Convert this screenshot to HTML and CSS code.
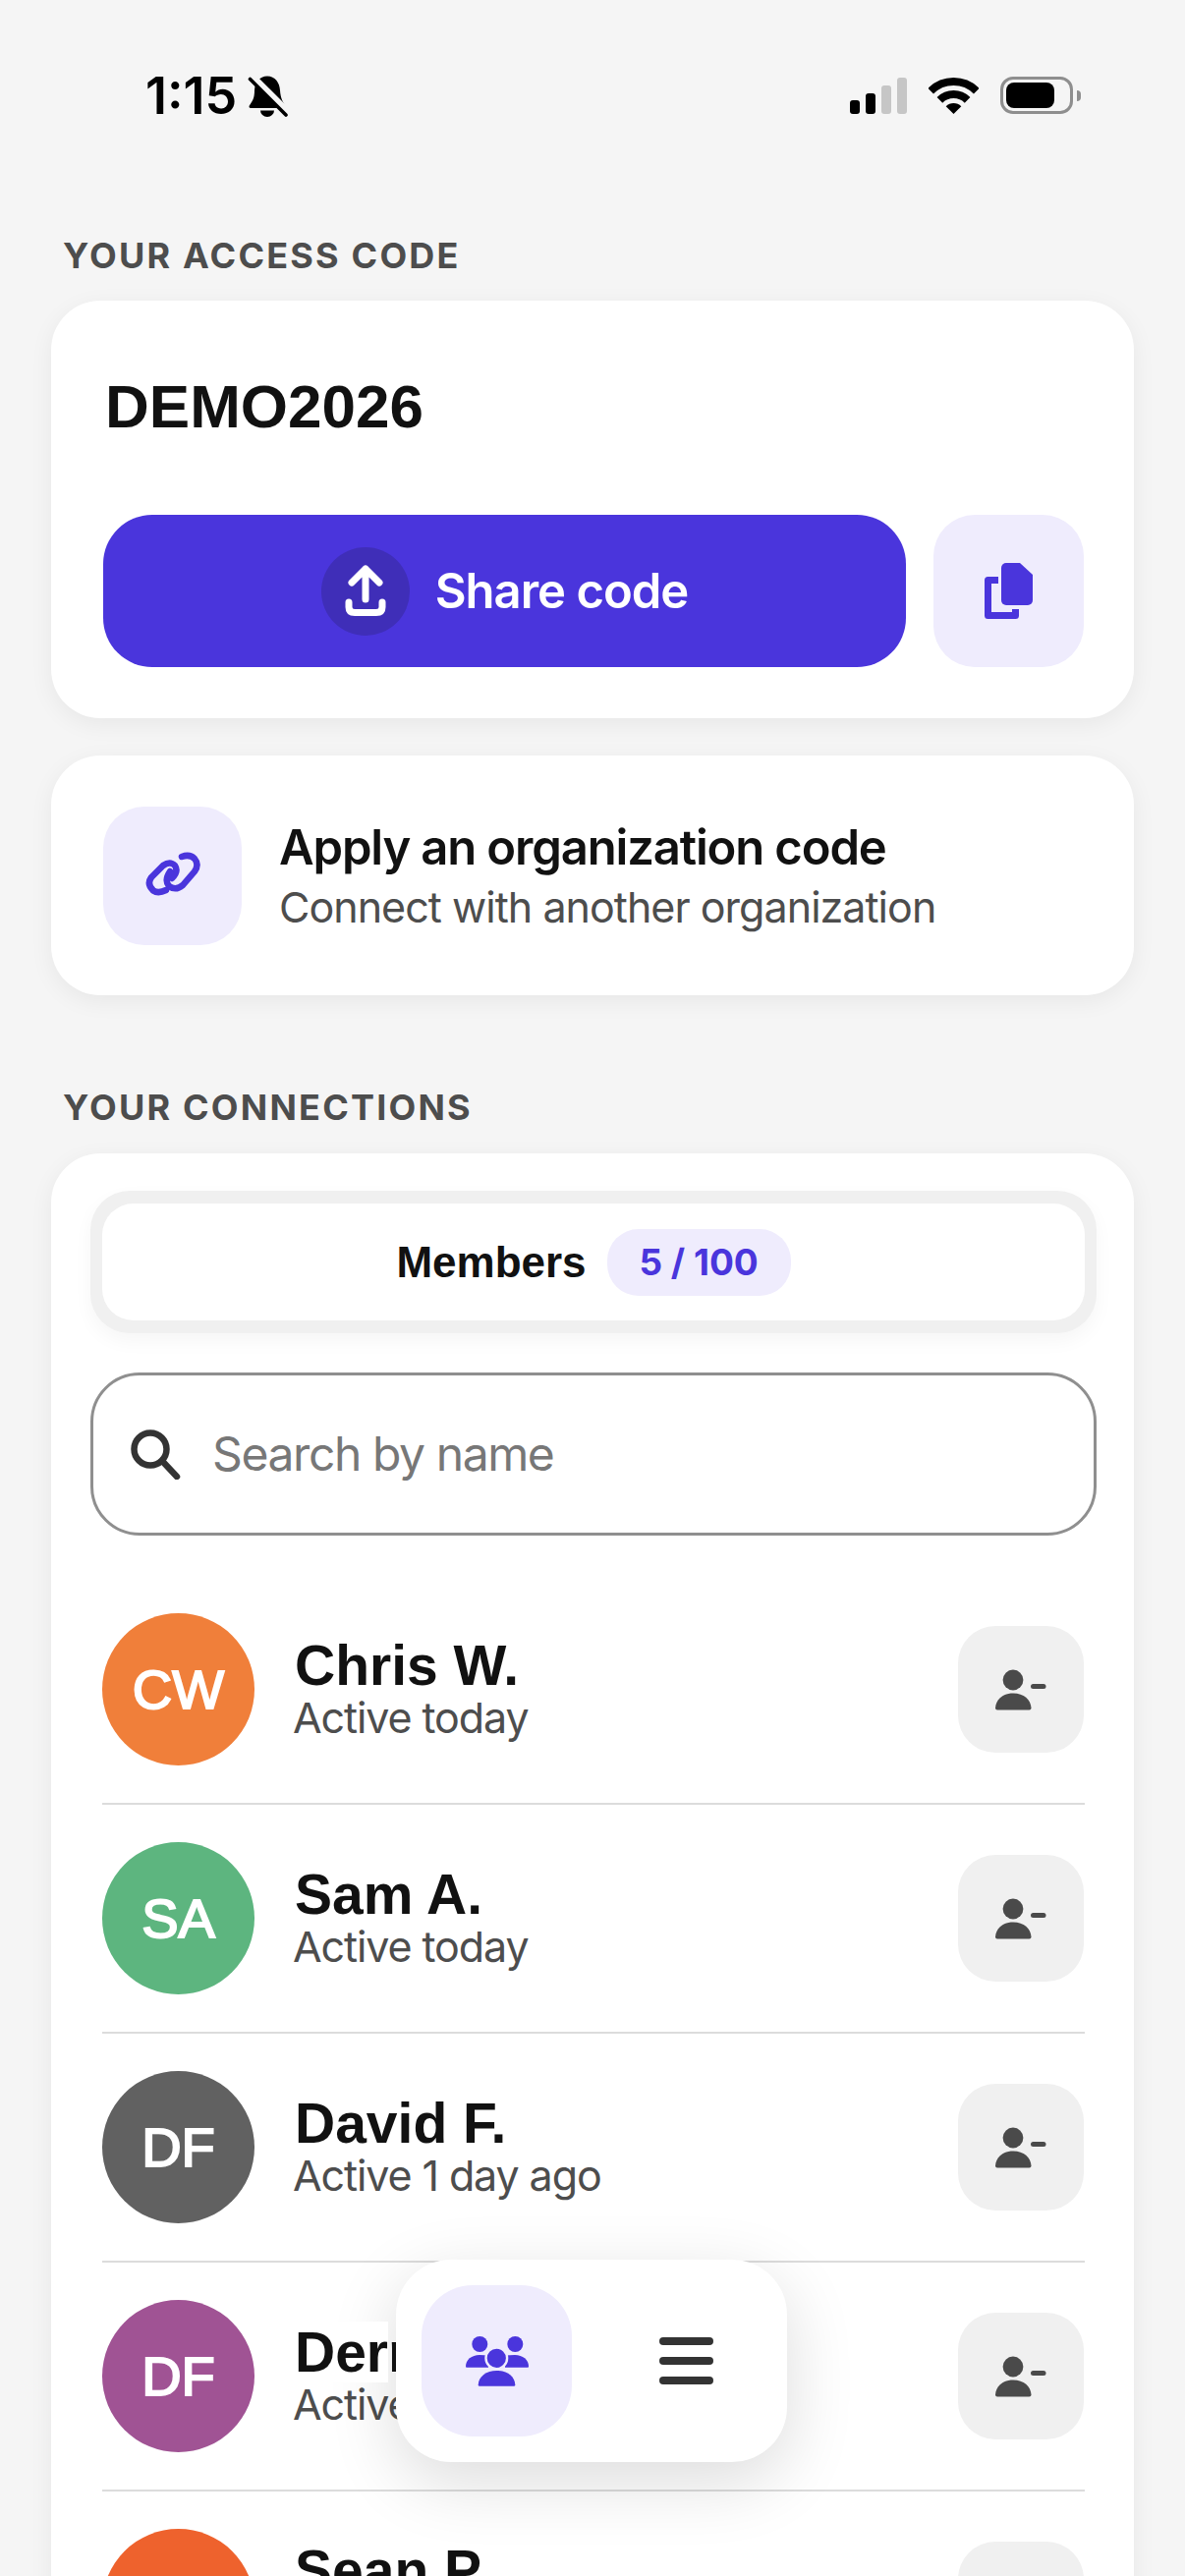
FILE: index.html
```html
<!DOCTYPE html>
<html lang="en">
<head>
    <meta charset="UTF-8">
    <meta name="viewport" content="width=device-width, initial-scale=1.0">
    <title>Connections</title>
    <link rel="stylesheet" href="styles.css">
</head>
<body>

    <!-- shared icon -->
    <svg class="sprite">
        <symbol id="icon-remove" viewBox="0 0 52 42">
            <circle cx="18" cy="11" r="10.4"/>
            <path d="M2 41.5H34.5Q36.5 41.5 36.5 39.5C36 31 29 24.5 18.2 24.5S.5 31 0 39.5Q0 41.5 2 41.5Z"/>
            <rect x="36" y="15" width="15.5" height="5" rx="2.5"/>
        </symbol>
    </svg>

    <div class="phone">

        <!-- status bar -->
        <div class="status-bar">
            <div class="status-left">
                <span class="time">1:15</span>
                <svg class="bell" viewBox="253 77 41 43">
                    <path d="M273 77.5C281 77.5 285.5 84 286 92C286.5 100 289 104 291 107Q292 110 289 110H256.5Q253.5 110 255 107C258 103 260 100 260 92C260.5 84 265 77.5 273 77.5Z"/>
                    <path d="M266 112.5a7 6.5 0 0 0 14 0Z"/>
                    <path class="bell-gap" d="M257 77L297 117"/>
                    <path class="bell-slash" d="M255.5 80.5L292 117"/>
                </svg>
            </div>
            <div class="status-right">
                <div class="signal">
                    <span class="bar bar-1"></span>
                    <span class="bar bar-2"></span>
                    <span class="bar bar-3 off"></span>
                    <span class="bar bar-4 off"></span>
                </div>
                <svg class="wifi" viewBox="945 78 51 39">
                    <path class="wifi-arc" d="M947.2 92.7A33 33 0 0 1 993.8 92.7"/>
                    <path class="wifi-arc" d="M956.4 101.9A20 20 0 0 1 984.6 101.9"/>
                    <path d="M970.5 116L962.7 108.2A11 11 0 0 1 978.3 108.2Z"/>
                </svg>
                <div class="battery">
                    <div class="battery-level"></div>
                </div>
                <span class="battery-nub"></span>
            </div>
        </div>

        <h2 class="section-label">YOUR ACCESS CODE</h2>

        <div class="card code-card">
            <div class="code">DEMO2026</div>
            <div class="code-actions">
                <button class="share-btn">
                    <span class="share-circle">
                        <svg class="share-icon" viewBox="0 0 48 54">
                            <path d="M24 35V4M10 18L24 4L38 18"/>
                            <path d="M7 38V43Q7 48.5 13 48.5H35Q41 48.5 41 43V38"/>
                        </svg>
                    </span>
                    Share code
                </button>
                <button class="copy-btn">
                    <svg class="copy-icon" viewBox="0 0 54 60">
                        <path class="copy-back" d="M16 18.5H5.5V54.5H33.5V48"/>
                        <path d="M24 1H38L51 13V39a5 5 0 0 1-5 5H24a5 5 0 0 1-5-5V6a5 5 0 0 1 5-5Z"/>
                    </svg>
                </button>
            </div>
        </div>

        <div class="card apply-card">
            <div class="apply-tile">
                <svg class="link-icon" viewBox="145 867 60 50">
                    <path d="M168 907Q160 911 155 907.5Q148 901 153 894L165 882Q172 877 177 882Q181 888 174 895"/>
                    <path d="M184 873Q192 870 197 875Q202 881 197 888L185 902Q178 908 171 903Q166 897 172 888"/>
                </svg>
            </div>
            <div class="apply-text">
                <div class="apply-title">Apply an organization code</div>
                <div class="apply-sub">Connect with another organization</div>
            </div>
        </div>

        <h2 class="section-label connections-label">YOUR CONNECTIONS</h2>

        <div class="card connections-card">
            <div class="segment">
                <div class="segment-item">
                    <span class="segment-name">Members</span>
                    <span class="segment-count">5 / 100</span>
                </div>
            </div>

            <div class="search">
                <svg class="search-icon" viewBox="0 0 52 52">
                    <circle cx="21" cy="21" r="16.5"/>
                    <path d="M33 33L48 49"/>
                </svg>
                <span class="search-text">Search by name</span>
            </div>

            <div class="member-list">
                <div class="member">
                    <div class="avatar orange">CW</div>
                    <div class="member-info">
                        <div class="member-name">Chris W.</div>
                        <div class="member-seen">Active today</div>
                    </div>
                    <button class="remove-btn"><svg class="remove-icon"><use href="#icon-remove"/></svg></button>
                </div>
                <div class="member">
                    <div class="avatar green">SA</div>
                    <div class="member-info">
                        <div class="member-name">Sam A.</div>
                        <div class="member-seen">Active today</div>
                    </div>
                    <button class="remove-btn"><svg class="remove-icon"><use href="#icon-remove"/></svg></button>
                </div>
                <div class="member">
                    <div class="avatar grey">DF</div>
                    <div class="member-info">
                        <div class="member-name">David F.</div>
                        <div class="member-seen">Active 1 day ago</div>
                    </div>
                    <button class="remove-btn"><svg class="remove-icon"><use href="#icon-remove"/></svg></button>
                </div>
                <div class="member">
                    <div class="avatar purple">DF</div>
                    <div class="member-info">
                        <div class="member-name name-cut">Derrick F.</div>
                        <div class="member-seen">Active today</div>
                    </div>
                    <button class="remove-btn"><svg class="remove-icon"><use href="#icon-remove"/></svg></button>
                </div>
                <div class="member">
                    <div class="avatar red">SP</div>
                    <div class="member-info raised">
                        <div class="member-name">Sean P.</div>
                        <div class="member-seen">Active today</div>
                    </div>
                    <button class="remove-btn"><svg class="remove-icon"><use href="#icon-remove"/></svg></button>
                </div>
            </div>
        </div>

        <!-- floating nav -->
        <div class="bottom-nav">
            <div class="nav-item active">
                <svg class="group-icon" viewBox="0 0 64 53">
                    <circle cx="14.3" cy="9" r="8"/>
                    <circle cx="50.3" cy="9" r="8"/>
                    <path d="M1 32.7H23V20.5Q19 20 14 20C6 20 0 25 0 31.7Q0 32.7 1 32.7Z"/>
                    <path d="M63 32.7H40V20.5Q45 20 50 20C58 20 64 25 64 31.7Q64 32.7 63 32.7Z"/>
                    <circle class="group-front" cx="31.3" cy="23.3" r="10.8"/>
                    <path d="M14 51.7H49Q50.3 51.7 50.3 50.4C50 42 42 36 31.5 36S13 42 12.7 50.4Q12.7 51.7 14 51.7Z"/>
                </svg>
            </div>
            <div class="nav-item">
                <div class="menu-icon">
                    <span></span>
                    <span></span>
                    <span></span>
                </div>
            </div>
        </div>

    </div>

</body>
</html>
```

FILE: styles.css
```css
/* reset */
* {
    margin: 0;
    padding: 0;
    box-sizing: border-box;
    font-family: 'Inter', 'Liberation Sans', sans-serif;
}

body {
    width: 1206px;
    height: 2622px;
    overflow: hidden;
    background: #f5f5f5;
}

button {
    border: none;
}

.sprite {
    display: none;
}

.phone {
    position: relative;
    width: 1206px;
    height: 2622px;
    padding: 0 52px;
    overflow: hidden;
}

/* status bar */
.status-bar {
    display: flex;
    justify-content: space-between;
    height: 237px;
    margin: 0 -52px;
    padding: 0 106px 0 148px;
}

.status-left {
    display: flex;
    align-items: flex-start;
    gap: 11px;
    padding-top: 67px;
}

.time {
    font-size: 52px;
    line-height: 62px;
    font-weight: 600;
    color: #000;
}

.bell {
    width: 41px;
    height: 43px;
    margin-top: 10px;
}

.bell-gap {
    fill: none;
    stroke: #f5f5f5;
    stroke-width: 7;
}

.bell-slash {
    fill: none;
    stroke: #000;
    stroke-width: 3.6;
    stroke-linecap: round;
}

.status-right {
    display: flex;
    align-items: flex-start;
    padding-top: 78px;
}

.signal {
    display: flex;
    align-items: flex-end;
    gap: 6px;
    height: 38px;
}

.bar {
    width: 10px;
    background: #000;
    border-radius: 3px;
}

.bar.off {
    background: #c6c6c6;
}

.bar-1 { height: 14px; }
.bar-2 { height: 21px; }
.bar-3 { height: 29px; }
.bar-4 { height: 37px; }

.wifi {
    width: 51px;
    height: 39px;
    margin-left: 22px;
}

.wifi-arc {
    fill: none;
    stroke: #000;
    stroke-width: 8;
}

.battery {
    width: 74px;
    height: 38px;
    margin-left: 22px;
    padding: 3px;
    border: 3px solid #8e8e8e;
    border-radius: 13px;
}

.battery-level {
    width: 49px;
    height: 26px;
    background: #000;
    border-radius: 8px;
}

.battery-nub {
    width: 4px;
    height: 11px;
    margin: 14px 0 0 4px;
    background: #8e8e8e;
    border-radius: 0 4px 4px 0;
}

/* section titles */
.section-label {
    height: 46px;
    margin: 0 0 23px 12px;
    font-size: 36px;
    line-height: 46px;
    font-weight: 700;
    letter-spacing: 2.2px;
    color: #4d4d4d;
}

.connections-label {
    margin-top: 91px;
    margin-bottom: 24px;
}

/* cards */
.card {
    background: #fff;
    border-radius: 50px;
    box-shadow: 0 6px 24px rgba(0, 0, 0, 0.06);
}

.code-card {
    padding: 52px 51px 52px 53px;
}

.code {
    font-family: 'Liberation Sans', sans-serif;
    font-size: 62px;
    line-height: 112px;
    font-weight: 700;
    color: #111;
    margin: 0 0 54px 2px;
}

.code-actions {
    display: flex;
    gap: 28px;
}

.share-btn {
    flex: 1;
    display: flex;
    align-items: center;
    justify-content: center;
    gap: 26px;
    height: 155px;
    background: #4a35dc;
    border-radius: 50px;
    color: #fff;
    font-size: 49px;
    font-weight: 600;
    letter-spacing: -1px;
}

.share-circle {
    display: flex;
    align-items: center;
    justify-content: center;
    width: 90px;
    height: 90px;
    background: #3f2eb8;
    border-radius: 50%;
}

.share-icon {
    width: 48px;
    height: 54px;
    fill: none;
    stroke: #fff;
    stroke-width: 7;
    stroke-linecap: round;
    stroke-linejoin: round;
}

.copy-btn {
    display: flex;
    align-items: center;
    justify-content: center;
    width: 153px;
    height: 155px;
    background: #efecfd;
    border-radius: 42px;
}

.copy-icon {
    width: 54px;
    height: 60px;
    fill: #4a35dc;
}

.copy-back {
    fill: none;
    stroke: #4a35dc;
    stroke-width: 7;
    stroke-linejoin: round;
}

/* apply code */
.apply-card {
    display: flex;
    align-items: center;
    gap: 38px;
    height: 244px;
    margin-top: 38px;
    padding: 0 53px;
}

.apply-tile {
    display: flex;
    align-items: center;
    justify-content: center;
    width: 141px;
    height: 141px;
    background: #efecfd;
    border-radius: 42px;
}

.link-icon {
    width: 60px;
    height: 50px;
    fill: none;
    stroke: #4a35dc;
    stroke-width: 6.5;
    stroke-linecap: round;
}

.apply-text {
    padding-top: 3px;
}

.apply-title {
    font-size: 49px;
    line-height: 60px;
    font-weight: 600;
    letter-spacing: -1.15px;
    color: #111;
}

.apply-sub {
    font-size: 43px;
    line-height: 60px;
    letter-spacing: -0.97px;
    color: #4d4d4d;
}

/* connections */
.connections-card {
    padding: 38px 38px 0 40px;
    height: 1600px;
}

.segment {
    padding: 13px 12px;
    background: #f0f0f0;
    border-radius: 40px;
    box-shadow: 0 8px 20px rgba(0, 0, 0, 0.04);
}

.segment-item {
    display: flex;
    align-items: center;
    justify-content: center;
    gap: 21px;
    height: 119px;
    background: #fff;
    border-radius: 32px;
}

.segment-name {
    font-family: 'Liberation Sans', sans-serif;
    font-size: 44px;
    font-weight: 700;
    color: #111;
}

.segment-count {
    display: flex;
    align-items: center;
    justify-content: center;
    width: 187px;
    height: 68px;
    background: #efecfd;
    border-radius: 32px;
    font-size: 37px;
    font-weight: 700;
    color: #4a35dc;
}

.search {
    display: flex;
    align-items: center;
    gap: 32px;
    height: 166px;
    margin-top: 40px;
    padding: 0 37px;
    border: 3px solid #8f8f8f;
    border-radius: 50px;
}

.search-icon {
    width: 52px;
    height: 52px;
    fill: none;
    stroke: #333;
    stroke-width: 6.5;
    stroke-linecap: round;
}

.search-text {
    padding-bottom: 2px;
    font-size: 48px;
    letter-spacing: -1.4px;
    color: #777;
}

.member-list {
    margin: 41px 12px 0;
}

.member {
    display: flex;
    align-items: center;
    gap: 39px;
    height: 233px;
    border-bottom: 2px solid #dcdcdc;
}

.avatar {
    display: flex;
    align-items: center;
    justify-content: center;
    flex-shrink: 0;
    width: 155px;
    height: 155px;
    border-radius: 50%;
    font-family: 'Liberation Sans', sans-serif;
    font-size: 56px;
    -webkit-text-stroke: 2px #fff;
    color: #fff;
}

.orange { background: #f07f3a; }
.green { background: #5db57f; }
.grey { background: #616161; }
.purple { background: #a05394; }
.red { background: #ee622d; }

.member-info {
    flex: 1;
    padding-bottom: 3px;
}

/* last row text sits a bit higher than the others */
.member-info.raised {
    padding-bottom: 25px;
}

.member-name {
    padding-left: 2px;
    font-family: 'Liberation Sans', sans-serif;
    font-size: 57px;
    line-height: 62px;
    font-weight: 700;
    color: #111;
}

/* sits above the nav shadow, white only up to 97px, clipped where the nav starts */
.name-cut {
    position: relative;
    z-index: 3;
    width: 105px;
    height: 62px;
    overflow: hidden;
    background: linear-gradient(#fff, #fff) no-repeat 0 0 / 97px 100%;
    white-space: nowrap;
}

.member-seen {
    margin-top: -3px;
    font-size: 43px;
    line-height: 50px;
    letter-spacing: -1.1px;
    color: #4d4d4d;
}

.remove-btn {
    display: flex;
    align-items: center;
    justify-content: center;
    flex-shrink: 0;
    width: 128px;
    height: 129px;
    margin-right: 1px;
    background: #f0f0f0;
    border-radius: 38px;
}

.remove-icon {
    width: 52px;
    height: 42px;
    fill: #4a4a4a;
}

/* floating nav */
.bottom-nav {
    position: absolute;
    left: 403px;
    bottom: 116px;
    z-index: 2;
    display: flex;
    gap: 40px;
    padding: 26px;
    background: #fff;
    border-radius: 56px;
    box-shadow: 0 20px 70px rgba(0, 0, 0, 0.14);
}

.nav-item {
    display: flex;
    align-items: center;
    justify-content: center;
    width: 153px;
    height: 154px;
    border-radius: 52px;
}

.nav-item.active {
    background: #efecfd;
}

.group-icon {
    width: 64px;
    height: 53px;
    fill: #4a35dc;
}

.group-front {
    stroke: #efecfd;
    stroke-width: 2.4;
}

.menu-icon {
    display: flex;
    flex-direction: column;
    gap: 12px;
    width: 55px;
}

.menu-icon span {
    height: 8px;
    background: #333;
    border-radius: 4px;
}
```
